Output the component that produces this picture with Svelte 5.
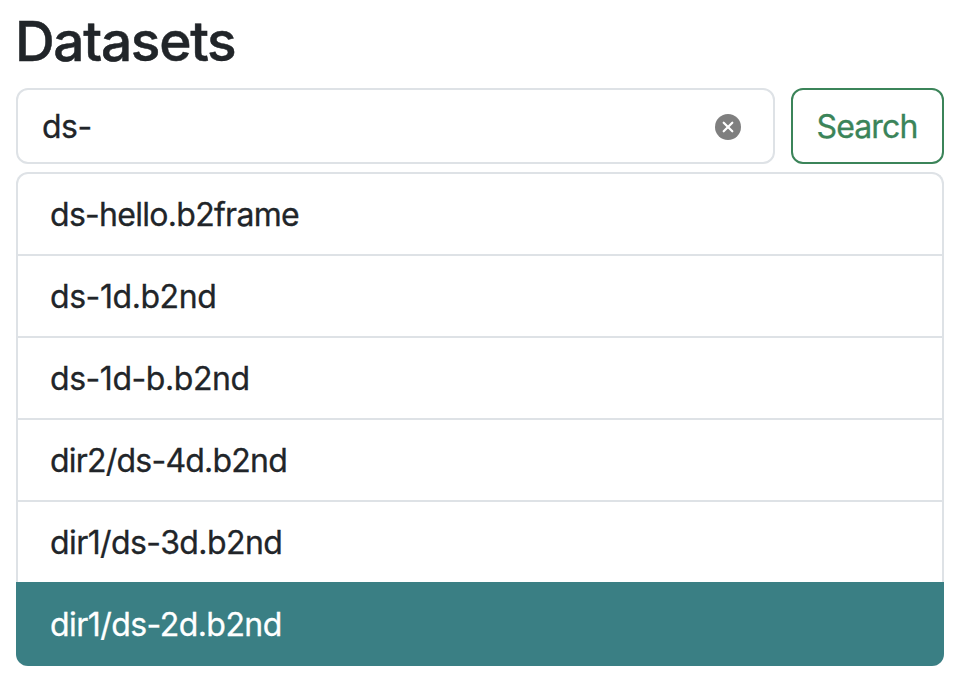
<script>
  let query = $state('ds-');
  const datasets = [
    { name: 'ds-hello.b2frame', tracking: -0.71 },
    { name: 'ds-1d.b2nd', tracking: -0.43 },
    { name: 'ds-1d-b.b2nd', tracking: -0.45 },
    { name: 'dir2/ds-4d.b2nd', tracking: -0.78 },
    { name: 'dir1/ds-3d.b2nd', tracking: -0.58 },
    { name: 'dir1/ds-2d.b2nd', tracking: -0.55 }
  ];
  let active = $state(5);
</script>

<main>
  <h1>Datasets</h1>
  <form onsubmit={(e) => e.preventDefault()}>
    <div class="field">
      <input type="text" aria-label="Search datasets" bind:value={query} />
      <button type="button" class="clear" aria-label="Clear" onclick={() => (query = '')}>
        <svg width="26" height="26" viewBox="0 0 26 26">
          <circle cx="13" cy="13" r="13" fill="#7f7f7f" />
          <path d="M8.7 8.7l8.6 8.6M17.3 8.7l-8.6 8.6" stroke="#fff" stroke-width="2.2" stroke-linecap="round" />
        </svg>
      </button>
    </div>
    <button class="search" type="submit">Search</button>
  </form>
  <div class="list">
    {#each datasets as { name, tracking }, i}
      <button class="item" class:active={i === active} style:letter-spacing="{tracking}px" onclick={() => (active = i)}>{name}</button>
    {/each}
  </div>
</main>

<style>
  :global(body) { background: #fff; }
  main { padding: 8px 18px 0 16px; color: #212529; font-family: Inter, sans-serif; font-size: 32px; line-height: 48px; -webkit-text-stroke: 0.3px currentColor; }
  h1 { margin: 0 0 14px; font-size: 55px; font-weight: 500; line-height: 66px; letter-spacing: -1.32px; text-indent: -1px; -webkit-text-stroke: 0.5px currentColor; }
  form { display: flex; gap: 16px; }
  button, input { font: inherit; color: inherit; box-sizing: border-box; }
  .field { display: flex; align-items: center; width: 759px; height: 76px; box-sizing: border-box; border: 2px solid #dee2e6; border-radius: 12px; padding: 2px 32px 0 24px; }
  input { flex: 1; min-width: 0; height: 48px; border: 0; outline: 0; padding: 0; background: transparent; letter-spacing: -0.5px; }
  .clear { display: flex; padding: 0; border: 0; background: none; }
  .search { flex: 1; padding: 2px 1px 0 0; border: 2px solid #3b8459; border-radius: 12px; background: #fff; color: #3b8459; letter-spacing: -0.85px; }
  .list { display: flex; flex-direction: column; margin-top: 8px; border: 2px solid #dee2e6; border-bottom: 0; border-radius: 12px; }
  .item { height: 82px; padding: 2px 32px 0; border: 0; border-bottom: 2px solid #dee2e6; background: none; text-align: left; }
  .item:nth-last-child(2) { height: 80px; border-bottom: 0; }
  .active { height: 84px; margin: 0 -2px; padding: 2px 34px 0; border: 0; border-radius: 0 0 12px 12px; background: #3a7f84; color: #fff; }
</style>
